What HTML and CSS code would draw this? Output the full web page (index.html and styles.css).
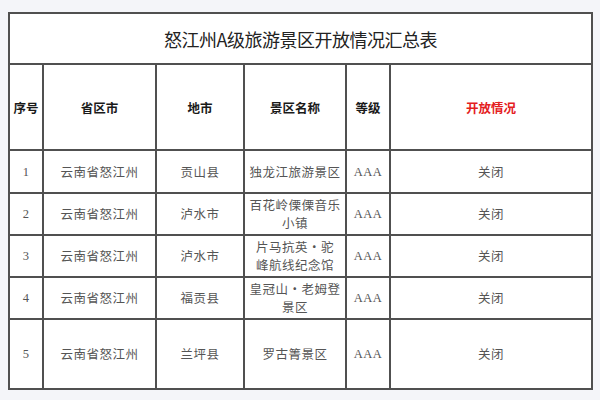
FILE: index.html
```html
<!DOCTYPE html>
<html lang="zh-CN">
<head>
<meta charset="utf-8">
<link rel="stylesheet" href="styles.css">
</head>
<body>
<div class="page">
<table class="sheet">
  <colgroup>
    <col class="c1"><col class="c2"><col class="c3"><col class="c4"><col class="c5"><col class="c6">
  </colgroup>
  <tr class="title-row"><td colspan="6" class="title">怒江州A级旅游景区开放情况汇总表</td></tr>
  <tr class="head-row">
    <th>序号</th><th>省区市</th><th>地市</th><th>景区名称</th><th>等级</th><th class="red">开放情况</th>
  </tr>
  <tr class="r1"><td class="num">1</td><td>云南省怒江州</td><td>贡山县</td><td>独龙江旅游景区</td><td class="lvl">AAA</td><td>关闭</td></tr>
  <tr class="r2"><td class="num">2</td><td>云南省怒江州</td><td>泸水市</td><td>百花岭傈傈音乐<br>小镇</td><td class="lvl">AAA</td><td>关闭</td></tr>
  <tr class="r3"><td class="num">3</td><td>云南省怒江州</td><td>泸水市</td><td>片马抗英•驼<br>峰航线纪念馆</td><td class="lvl">AAA</td><td>关闭</td></tr>
  <tr class="r4"><td class="num">4</td><td>云南省怒江州</td><td>福贡县</td><td>皇冠山•老姆登<br>景区</td><td class="lvl">AAA</td><td>关闭</td></tr>
  <tr class="r5"><td class="num">5</td><td>云南省怒江州</td><td>兰坪县</td><td>罗古箐景区</td><td class="lvl">AAA</td><td>关闭</td></tr>
</table>
</div>
</body>
</html>
```

FILE: styles.css
```css
html, body {
  margin: 0;
  padding: 0;
  background: #f4f5f9;
}
.page {
  width: 600px;
  height: 400px;
  padding: 12px 0 0 8px;
  box-sizing: border-box;
}
.sheet {
  border-collapse: collapse;
  table-layout: fixed;
  width: 583px;
  background: #ffffff;
  font-family: "Noto Sans CJK SC", "Noto Sans", sans-serif;
  color: #555;
}
.sheet td, .sheet th {
  border: 2px solid #505050;
  padding: 0;
  text-align: center;
  vertical-align: middle;
}
.c1 { width: 34px; }
.c2 { width: 113px; }
.c3 { width: 88px; }
.c4 { width: 102px; }
.c5 { width: 44px; }
.c6 { width: 202px; }
.title-row { height: 51px; }
.title {
  font-size: 18px;
  font-weight: 400;
  color: #222;
  letter-spacing: -0.5px;
}
.head-row { height: 86px; }
.head-row th {
  font-size: 12.5px;
  font-weight: 700;
  color: #1a1a1a;
}
.head-row th.red { color: #e4201e; }
.r1 { height: 43px; }
.r2, .r3, .r4 { height: 42px; }
.r5 { height: 70px; }
.sheet tr:not(.title-row):not(.head-row) td {
  font-size: 12.5px;
  font-weight: 400;
  line-height: 18px;
  letter-spacing: 0.5px;
  color: #555555;
}
.sheet td.num {
  font-family: "Liberation Serif", serif;
  font-size: 12px;
  letter-spacing: 0;
}
.sheet td.lvl {
  font-family: "Liberation Serif", serif;
  font-size: 12px;
  letter-spacing: -0.5px;
}
```
